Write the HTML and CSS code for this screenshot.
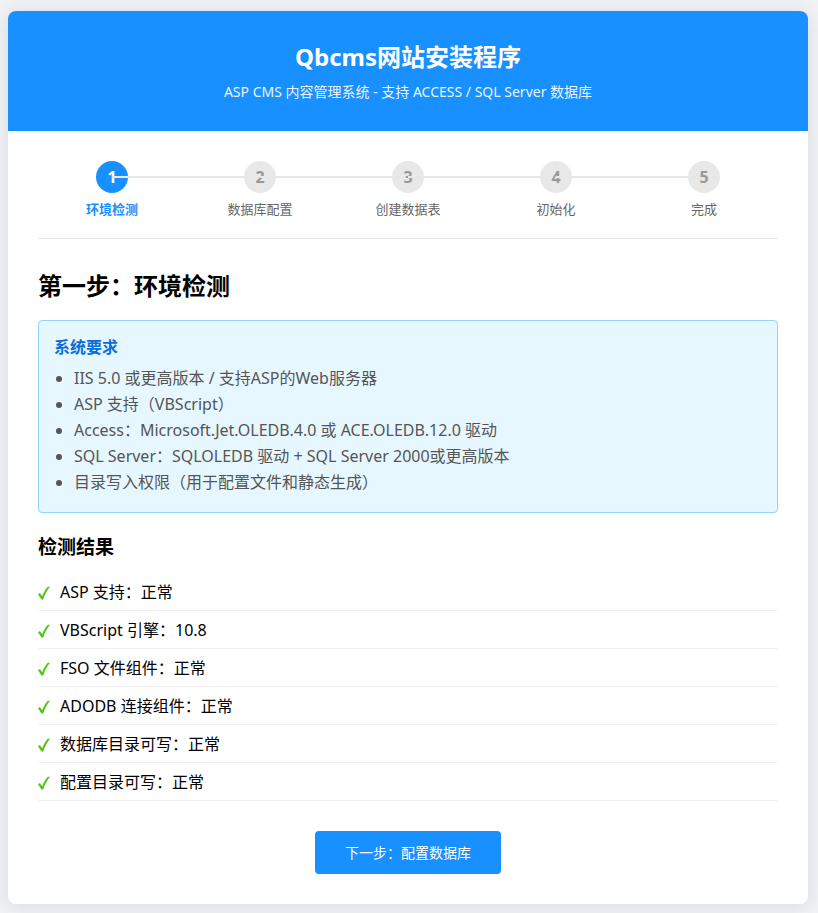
FILE: index.html
```html
<!DOCTYPE html>
<html lang="zh-CN">

<head>
    <meta charset="utf-8">
    <meta name="viewport" content="width=device-width, initial-scale=1">
    <title>Qbcms网站安装程序</title>
    <link rel="stylesheet" href="styles.css">
</head>

<body>
    <svg class="sprite" aria-hidden="true">
        <symbol id="check" viewBox="0 0 12 14">
            <path d="M0 8.2 L1.9 7 L4.2 10.2 C5.6 6.4 7.5 3.2 9.8 0.8 L12 0.8 C9.1 4.3 6.8 8.5 5.2 13.4 L3.4 13.4 Z" />
        </symbol>
    </svg>
    <div class="container">
        <header class="header">
            <h1>Qbcms网站安装程序</h1>
            <p>ASP CMS 内容管理系统 - 支持 ACCESS / SQL Server 数据库</p>
        </header>
        <main class="content">
            <div class="steps">
                <div class="step active">
                    <div class="step-num">1</div>
                    <div class="step-title">环境检测</div>
                </div>
                <div class="step">
                    <div class="step-num">2</div>
                    <div class="step-title">数据库配置</div>
                </div>
                <div class="step">
                    <div class="step-num">3</div>
                    <div class="step-title">创建数据表</div>
                </div>
                <div class="step">
                    <div class="step-num">4</div>
                    <div class="step-title">初始化</div>
                </div>
                <div class="step">
                    <div class="step-num">5</div>
                    <div class="step-title">完成</div>
                </div>
            </div>

            <h2>第一步：环境检测</h2>
            <div class="info-box">
                <h4>系统要求</h4>
                <ul>
                    <li>IIS 5.0 或更高版本 / 支持ASP的Web服务器</li>
                    <li>ASP 支持（VBScript）</li>
                    <li>Access：Microsoft.Jet.OLEDB.4.0 或 ACE.OLEDB.12.0 驱动</li>
                    <li>SQL Server：SQLOLEDB 驱动 + SQL Server 2000或更高版本</li>
                    <li>目录写入权限（用于配置文件和静态生成）</li>
                </ul>
            </div>

            <h3>检测结果</h3>
            <ul class="check-list">
                <li><svg class="ok"><use href="#check" /></svg>ASP 支持：正常</li>
                <li><svg class="ok"><use href="#check" /></svg>VBScript 引擎：10.8</li>
                <li><svg class="ok"><use href="#check" /></svg>FSO 文件组件：正常</li>
                <li><svg class="ok"><use href="#check" /></svg>ADODB 连接组件：正常</li>
                <li><svg class="ok"><use href="#check" /></svg>数据库目录可写：正常</li>
                <li><svg class="ok"><use href="#check" /></svg>配置目录可写：正常</li>
            </ul>

            <div class="actions">
                <button type="button" class="btn">下一步：配置数据库</button>
            </div>
        </main>
    </div>
</body>

</html>
```

FILE: styles.css
```css
* {
    margin: 0;
    padding: 0;
    box-sizing: border-box;
}

body {
    font-family: "Segoe UI", "Noto Sans", "Noto Sans CJK SC", sans-serif;
    font-size: 16px;
    line-height: 21px;
    background: #f0f2f5;
    color: #000;
    padding: 11px 10px 9px 8px;
}

.sprite {
    display: none;
}

.container {
    max-width: 800px;
    margin: 0 auto;
    background: #fff;
    border-radius: 8px;
    box-shadow: 0 2px 20px rgba(0, 0, 0, 0.1);
    overflow: hidden;
}

.header {
    background: #1890ff;
    color: #fff;
    padding: 30px;
    text-align: center;
}

.header h1 {
    font-size: 24px;
    line-height: 32px;
    margin-bottom: 10px;
}

.header p {
    font-size: 14px;
    line-height: 18px;
    opacity: 0.9;
}

.content {
    padding: 30px;
}

/* steps */
.steps {
    display: flex;
    padding-bottom: 20px;
    margin-bottom: 30px;
    border-bottom: 1px solid #e8e8e8;
}

.step {
    flex: 1;
    position: relative;
    text-align: center;
}

.step:not(:last-child)::after {
    content: "";
    position: absolute;
    top: 15px;
    left: 50%;
    width: 100%;
    height: 2px;
    background: #e8e8e8;
}

.step-num {
    width: 32px;
    height: 32px;
    line-height: 32px;
    margin: 0 auto 8px;
    border-radius: 50%;
    background: #e8e8e8;
    color: #999;
    font-weight: bold;
}

.step-title {
    font-size: 13px;
    line-height: 17px;
    color: #666;
}

.step.active .step-num {
    background: #1890ff;
    color: #fff;
}

.step.active .step-title {
    color: #1890ff;
    font-weight: bold;
}

h2 {
    font-size: 24px;
    line-height: 33px;
    margin-bottom: 18px;
}

h3 {
    font-size: 19px;
    line-height: 28px;
    margin-bottom: 12px;
}

/* requirements */
.info-box {
    background: #e6f7ff;
    border: 1px solid #91d5ff;
    border-radius: 4px;
    padding: 16px 15px 14px;
    margin-bottom: 20px;
}

.info-box h4 {
    color: #096dd9;
    margin-bottom: 10px;
}

.info-box ul {
    padding-left: 20px;
    color: #555;
}

.info-box li {
    margin-bottom: 5px;
}

/* results */
.check-list {
    list-style: none;
}

.check-list li {
    display: flex;
    align-items: center;
    gap: 10px;
    padding: 9px 0 7px;
    border-bottom: 1px solid #f0f0f0;
}

.ok {
    width: 12px;
    height: 14px;
    fill: #52c41a;
}

.actions {
    margin-top: 30px;
    text-align: center;
}

.btn {
    display: inline-block;
    vertical-align: top;
    padding: 12px 30px;
    border: none;
    border-radius: 4px;
    background: #1890ff;
    color: #fff;
    font-family: inherit;
    font-size: 14px;
    line-height: 19px;
    cursor: pointer;
}

.btn:hover {
    background: #40a9ff;
}
```
